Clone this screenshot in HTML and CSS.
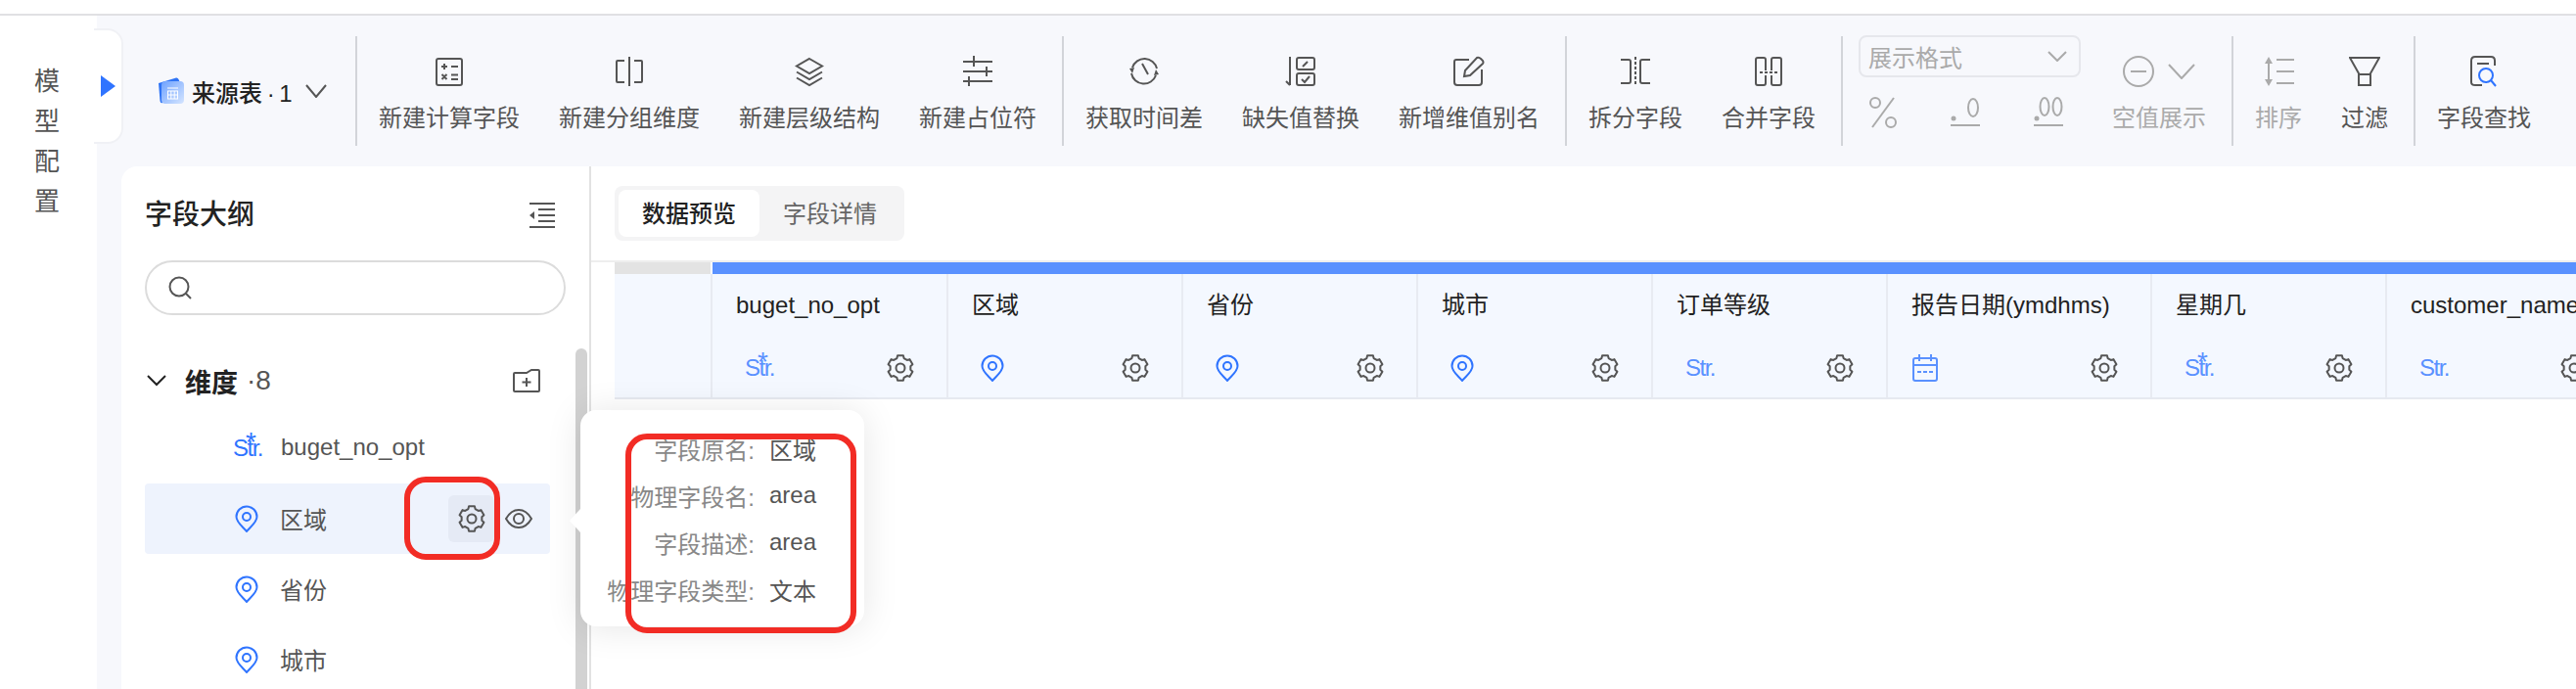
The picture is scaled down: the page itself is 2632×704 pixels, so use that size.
FILE: index.html
```html
<!DOCTYPE html>
<html lang="zh-CN">
<head>
    <meta charset="UTF-8">
    <title>模型配置</title>
    <link rel="stylesheet" href="styles.css">
</head>
<body>
<svg class="sprite" width="0" height="0">
    <symbol id="gear" viewBox="0 0 28 28">
        <path d="M11.08 1.33L16.92 1.33L17.59 4.13L20.75 5.96L23.5 5.13L26.43 10.2L24.34 12.18L24.34 15.82L26.43 17.8L23.5 22.87L20.75 22.04L17.59 23.87L16.92 26.67L11.08 26.67L10.41 23.87L7.25 22.04L4.5 22.87L1.57 17.8L3.66 15.82L3.66 12.18L1.57 10.2L4.5 5.13L7.25 5.96L10.41 4.13Z"/>
        <circle cx="14" cy="14" r="4.5"/>
    </symbol>
    <symbol id="pin" viewBox="0 0 24 28">
        <path d="M12 27C9 23 1.5 18 1.5 12A10.5 10.5 0 0 1 22.5 12C22.5 18 15 23 12 27Z"/>
        <circle cx="12" cy="12" r="4"/>
    </symbol>
</svg>

<div class="page">
    <div class="topline"></div>
    <div class="app">
        <div class="rail">
            <div class="rail-title">模<br>型<br>配<br>置</div>
        </div>
        <div class="rail-tab"><span class="rail-arrow"></span></div>

        <div class="main">
            <div class="toolbar">
                <div class="source">
                    <svg class="source-icon" width="28" height="28" viewBox="0 0 28 28">
                        <defs>
                            <linearGradient id="srcfront" x1="0" y1="0" x2="1" y2="1">
                                <stop offset="0" stop-color="#6ea2ff"/>
                                <stop offset="1" stop-color="#d5e5ff"/>
                            </linearGradient>
                        </defs>
                        <path d="M1 6L19 0.5Q21 0 22 3L23 6L5 26Q3 27 2.500 24Z" fill="#2f74f5"/>
                        <rect x="4" y="4" width="23" height="23" rx="4" fill="url(#srcfront)"/>
                        <g stroke="#fff" stroke-width="1" fill="none">
                            <path d="M10 11H21"/>
                            <rect x="10.500" y="14" width="10" height="8"/>
                            <path d="M10.500 18H20.500M13.800 14V22M17.200 14V22"/>
                        </g>
                    </svg>
                    <span class="source-name">来源表 · 1</span>
                    <svg class="chevron" width="22" height="14" viewBox="0 0 22 14"><path d="M1 1L11 13L21 1"/></svg>
                </div>

                <div class="tool-group">
                    <div class="tool">
                        <svg class="tool-icon" viewBox="0 0 32 32"><rect x="3" y="3" width="26" height="27" rx="2"/><path d="M8 11H14M11 8V14M18 11H25M8.500 19L13.500 24M13.500 19L8.500 24M18 19.500H25M18 24H25"/></svg>
                        <span class="tool-label">新建计算字段</span>
                    </div>
                    <div class="tool">
                        <svg class="tool-icon" viewBox="0 0 32 32"><path d="M16 1V31M11 5H4Q3 5 3 6V26Q3 27 4 27H11M21 5H28Q29 5 29 6V26Q29 27 28 27H21"/></svg>
                        <span class="tool-label">新建分组维度</span>
                    </div>
                    <div class="tool">
                        <svg class="tool-icon" viewBox="0 0 32 32"><path d="M16 3L29 10.500L16 18L3 10.500Z"/><path d="M3 16.500L16 24L29 16.500M3 22.500L16 30L29 22.500"/></svg>
                        <span class="tool-label">新建层级结构</span>
                    </div>
                    <div class="tool">
                        <svg class="tool-icon" viewBox="0 0 32 32"><path d="M1 6H31M1 16H31M1 26H31M12 0V11M25 11V21M7 21V31"/></svg>
                        <span class="tool-label">新建占位符</span>
                    </div>
                </div>

                <div class="tool-group">
                    <div class="tool">
                        <svg class="tool-icon" viewBox="0 0 32 32"><path d="M4 12A13 13 0 0 1 29 13M28 20A13 13 0 0 1 3 18M14 8L20 19"/><path class="solid" d="M1 13L6 12L4 18ZM31 19L26 20L28 14Z"/></svg>
                        <span class="tool-label">获取时间差</span>
                    </div>
                    <div class="tool">
                        <svg class="tool-icon" viewBox="0 0 32 32"><path d="M5 1V30M1 26L5 30"/><rect x="12" y="2" width="18" height="12" rx="2"/><rect x="12" y="18" width="18" height="12" rx="2"/><path d="M18 11L23 6M17 24L20 27L25 21"/></svg>
                        <span class="tool-label">缺失值替换</span>
                    </div>
                    <div class="tool">
                        <svg class="tool-icon" viewBox="0 0 32 32"><path d="M16 4H3Q1 4 1 6V27Q1 30 4 30H26Q29 30 29 27V14M11 21L12 15L24 2Q26 1 28 3L30 5Q31 7 30 8L17 20Z"/></svg>
                        <span class="tool-label">新增维值别名</span>
                    </div>
                </div>

                <div class="tool-group">
                    <div class="tool">
                        <svg class="tool-icon" viewBox="0 0 32 32"><path d="M1 4H9Q11 4 11 6V26Q11 28 9 28H1M31 4H23Q21 4 21 6V26Q21 28 23 28H31"/><path class="dash" d="M16 1V31"/></svg>
                        <span class="tool-label">拆分字段</span>
                    </div>
                    <div class="tool">
                        <svg class="tool-icon" viewBox="0 0 32 32"><path d="M13 15V4Q13 2 11 2H5Q3 2 3 4V28Q3 30 5 30H11Q13 30 13 28V20M19 15V4Q19 2 21 2H27Q29 2 29 4V28Q29 30 27 30H21Q19 30 19 28V20"/><path class="dash" d="M7 17H25"/></svg>
                        <span class="tool-label">合并字段</span>
                    </div>
                </div>

                <div class="tool-group format-group">
                    <div class="format">
                        <div class="format-select">
                            <span>展示格式</span>
                            <svg class="chevron" width="20" height="11" viewBox="0 0 20 11"><path d="M1 1L10 10L19 1"/></svg>
                        </div>
                        <div class="format-icons">
                            <svg width="28" height="32" viewBox="0 0 28 32"><circle cx="6" cy="6" r="5"/><circle cx="22" cy="26" r="5"/><path d="M25 1L3 31"/></svg>
                            <svg width="30" height="32" viewBox="0 0 30 32"><circle class="solid" cx="3" cy="22" r="2.500"/><ellipse cx="23" cy="11" rx="5" ry="9"/><path d="M0 29H30"/></svg>
                            <svg width="30" height="32" viewBox="0 0 30 32"><circle class="solid" cx="3" cy="22" r="2.500"/><ellipse cx="11" cy="10" rx="4.500" ry="9"/><ellipse cx="24" cy="10" rx="4.500" ry="9"/><path d="M0 29H30"/></svg>
                        </div>
                    </div>
                    <div class="tool tool-off">
                        <div class="null-icons">
                            <svg width="32" height="32" viewBox="0 0 32 32"><circle cx="16" cy="16" r="15"/><path d="M8 16H24"/></svg>
                            <svg class="chevron" width="28" height="16" viewBox="0 0 28 16"><path d="M1 1L14 15L27 1"/></svg>
                        </div>
                        <span class="tool-label">空值展示</span>
                    </div>
                </div>

                <div class="tool-group">
                    <div class="tool tool-off">
                        <svg class="tool-icon" viewBox="0 0 32 32"><path d="M14 4H32M14 16H32M14 28H32M6 6V26"/><path class="solid" d="M6 1L10 8H2ZM6 31L10 24H2Z"/></svg>
                        <span class="tool-label">排序</span>
                    </div>
                    <div class="tool">
                        <svg class="tool-icon" viewBox="0 0 32 32"><path d="M1 2H31L22 18V30H10V18ZM10 19H22"/></svg>
                        <span class="tool-label">过滤</span>
                    </div>
                </div>

                <div class="tool-group last-group">
                    <div class="tool">
                        <svg class="tool-icon" viewBox="0 0 32 32">
                            <path d="M14 30H7Q3 30 3 27V5Q3 1 7 1H23Q27 1 27 5V10M9 8H21"/>
                            <circle class="blue-stroke" cx="18" cy="20" r="7"/>
                            <path class="blue-stroke" d="M23 25L28 31"/>
                        </svg>
                        <span class="tool-label">字段查找</span>
                    </div>
                </div>
            </div>

            <div class="content">
                <div class="outline">
                    <div class="outline-head">
                        <span class="outline-title">字段大纲</span>
                        <svg class="line-icon" width="26" height="26" viewBox="0 0 26 26"><path d="M0 1H26M9 13H26M9 7H26M9 19H26M0 25H26"/><path class="solid" d="M0 13L5 9V17Z"/></svg>
                    </div>
                    <div class="search">
                        <svg class="line-icon" width="24" height="24" viewBox="0 0 24 24"><circle cx="11" cy="11" r="9.500"/><path d="M18 18L23 23"/></svg>
                    </div>
                    <div class="section-head">
                        <svg class="line-icon dark" width="20" height="12" viewBox="0 0 20 12"><path d="M1 1L10 10L19 1"/></svg>
                        <span class="section-name">维度</span>
                        <span class="section-count">·8</span>
                        <svg class="line-icon section-add" width="28" height="24" viewBox="0 0 28 24"><path d="M1 5Q1 4 2 4H14L19 1H26Q27 1 27 2V22Q27 23 26 23H2Q1 23 1 22ZM14 9V18M9.500 13.500H18.500"/></svg>
                    </div>
                    <div class="field-row">
                        <span class="type-str type-dark starred">Str.</span>
                        <span class="field-name">buget_no_opt</span>
                    </div>
                    <div class="field-row active">
                        <svg class="pin-icon" width="24" height="28"><use href="#pin"/></svg>
                        <span class="field-name">区域</span>
                        <div class="row-actions">
                            <span class="gear-box"><svg class="gear-icon" width="28" height="28"><use href="#gear"/></svg></span>
                            <svg class="line-icon" width="28" height="20" viewBox="0 0 28 20"><path d="M1 10C5 3 9 1 14 1C19 1 23 3 27 10C23 17 19 19 14 19C9 19 5 17 1 10Z"/><circle cx="14" cy="10" r="5"/></svg>
                        </div>
                    </div>
                    <div class="field-row">
                        <svg class="pin-icon" width="24" height="28"><use href="#pin"/></svg>
                        <span class="field-name">省份</span>
                    </div>
                    <div class="field-row">
                        <svg class="pin-icon" width="24" height="28"><use href="#pin"/></svg>
                        <span class="field-name">城市</span>
                    </div>
                    <div class="scroll-thumb"></div>
                </div>

                <div class="preview">
                    <div class="tabs">
                        <span class="tab tab-on">数据预览</span>
                        <span class="tab">字段详情</span>
                    </div>
                    <div class="preview-line"></div>
                    <div class="table">
                        <div class="strip">
                            <div class="strip-stub"></div>
                            <div class="strip-blue"></div>
                        </div>
                        <div class="head-row">
                            <div class="col col-stub"></div>
                            <div class="col col-first">
                                <div class="col-title">buget_no_opt</div>
                                <div class="col-foot"><span class="type-str starred">Str.</span><svg class="gear-icon" width="28" height="28"><use href="#gear"/></svg></div>
                            </div>
                            <div class="col">
                                <div class="col-title">区域</div>
                                <div class="col-foot"><svg class="pin-icon col-pin" width="24" height="28"><use href="#pin"/></svg><svg class="gear-icon" width="28" height="28"><use href="#gear"/></svg></div>
                            </div>
                            <div class="col">
                                <div class="col-title">省份</div>
                                <div class="col-foot"><svg class="pin-icon col-pin" width="24" height="28"><use href="#pin"/></svg><svg class="gear-icon" width="28" height="28"><use href="#gear"/></svg></div>
                            </div>
                            <div class="col">
                                <div class="col-title">城市</div>
                                <div class="col-foot"><svg class="pin-icon col-pin" width="24" height="28"><use href="#pin"/></svg><svg class="gear-icon" width="28" height="28"><use href="#gear"/></svg></div>
                            </div>
                            <div class="col">
                                <div class="col-title">订单等级</div>
                                <div class="col-foot"><span class="type-str">Str.</span><svg class="gear-icon" width="28" height="28"><use href="#gear"/></svg></div>
                            </div>
                            <div class="col col-wide">
                                <div class="col-title">报告日期(ymdhms)</div>
                                <div class="col-foot">
                                    <svg class="calendar-icon" width="26" height="28" viewBox="0 0 26 28"><rect x="1" y="4" width="24" height="23" rx="2"/><path d="M7 0V7M19 0V7M1 11H25"/><path stroke-dasharray="4 2" d="M5 18H22"/></svg>
                                    <svg class="gear-icon" width="28" height="28"><use href="#gear"/></svg>
                                </div>
                            </div>
                            <div class="col">
                                <div class="col-title">星期几</div>
                                <div class="col-foot"><span class="type-str starred">Str.</span><svg class="gear-icon" width="28" height="28"><use href="#gear"/></svg></div>
                            </div>
                            <div class="col">
                                <div class="col-title">customer_name</div>
                                <div class="col-foot"><span class="type-str">Str.</span><svg class="gear-icon" width="28" height="28"><use href="#gear"/></svg></div>
                            </div>
                        </div>
                    </div>
                </div>
            </div>
        </div>
    </div>

    <!-- 字段信息浮层 -->
    <div class="popover">
        <span class="pop-label">字段原名:</span><span class="pop-value">区域</span>
        <span class="pop-label">物理字段名:</span><span class="pop-value">area</span>
        <span class="pop-label">字段描述:</span><span class="pop-value">area</span>
        <span class="pop-label">物理字段类型:</span><span class="pop-value">文本</span>
    </div>

    <!-- 红框标注 -->
    <div class="mark mark-gear"></div>
    <div class="mark mark-info"></div>
</div>
</body>
</html>
```

FILE: styles.css
```css
* {
    box-sizing: border-box;
}

body {
    margin: 0;
    font-family: "Liberation Sans", "Noto Sans CJK SC", sans-serif;
    font-size: 24px;
    color: #555;
    background: #fff;
}

.sprite {
    position: absolute;
}

.page {
    position: relative;
    width: 2632px;
    height: 704px;
    overflow: hidden;
}

.topline {
    height: 16px;
    border-bottom: 2px solid #e0e0e3;
}

.app {
    display: flex;
    height: 688px;
    background: #f7f8fc;
}

/* 左侧竖条 */
.rail {
    width: 99px;
    flex: none;
    background: #fff;
}

.rail-title {
    margin-top: 47px;
    text-align: center;
    font-size: 26px;
    line-height: 41px;
    color: #555;
    padding-right: 3px;
}

.rail-tab {
    position: absolute;
    left: 96px;
    top: 29px;
    width: 30px;
    height: 118px;
    background: #fff;
    border: 2px solid #f0f1f5;
    border-left: none;
    border-radius: 0 16px 16px 0;
}

.rail-arrow {
    position: absolute;
    left: 7px;
    top: 46px;
    border-left: 15px solid #2f74ff;
    border-top: 11px solid transparent;
    border-bottom: 11px solid transparent;
}

.main {
    flex: 1;
    min-width: 0;
    display: flex;
    flex-direction: column;
}

/* 工具栏 */
.toolbar {
    height: 154px;
    flex: none;
    display: flex;
    padding-top: 21px;
    padding-left: 62px;
}

.source {
    width: 202px;
    height: 112px;
    display: flex;
    align-items: center;
    flex: none;
}

.source-icon {
    flex: none;
}

.source-name {
    margin-left: 7px;
    color: #222;
    font-weight: 500;
    white-space: nowrap;
    word-spacing: -2px;
}

.chevron {
    flex: none;
    fill: none;
    stroke: currentColor;
    stroke-width: 2;
}

.source .chevron {
    margin-left: 13px;
    color: #555;
}

.tool-group {
    height: 112px;
    display: flex;
    gap: 40px;
    padding: 0 26px 0 22px;
    border-left: 2px solid #d2d4d9;
}

.tool {
    display: flex;
    flex-direction: column;
    align-items: center;
    padding-top: 20px;
}

.tool-icon {
    width: 32px;
    height: 32px;
    fill: none;
    stroke: #555;
    stroke-width: 2;
}

.tool-icon .solid,
.line-icon .solid,
.format-icons .solid {
    fill: currentColor;
    stroke: none;
}

.tool-icon .solid {
    fill: #555;
}

.tool-icon .dash {
    stroke-dasharray: 3 2;
}

.tool-icon .blue-stroke {
    stroke: #2f74ff;
}

.tool-label {
    margin-top: 16px;
    line-height: 32px;
    color: #555;
    white-space: nowrap;
}

.tool-off .tool-label {
    color: #aaa;
}

.tool-off .tool-icon {
    stroke: #aaa;
}

.tool-off .tool-icon .solid {
    fill: #aaa;
}

/* 展示格式 */
.format-group {
    gap: 32px;
    padding-left: 16px;
}

.format {
    width: 227px;
}

.format-select {
    height: 43px;
    margin-top: -1px;
    padding: 0 12px 0 8px;
    display: flex;
    align-items: center;
    justify-content: space-between;
    border: 2px solid #e6e7ec;
    border-radius: 8px;
    color: #aaa;
}

.format-icons {
    display: flex;
    gap: 55px;
    margin-top: 20px;
    padding-left: 11px;
}

.format-icons svg {
    fill: none;
    stroke: #aaa;
    stroke-width: 2;
    color: #aaa;
}

.null-icons {
    display: flex;
    align-items: center;
    gap: 14px;
    height: 32px;
    color: #aaa;
}

.null-icons svg {
    fill: none;
    stroke: #aaa;
    stroke-width: 2;
}

.content {
    flex: 1;
    min-height: 0;
    display: flex;
    padding-left: 25px;
}

/* 字段大纲 */
.outline {
    position: relative;
    width: 480px;
    flex: none;
    padding: 0 0 0 24px;
    background: #fff;
    border-right: 2px solid #e2e2e2;
    border-radius: 16px 0 0 0;
}

.outline-head {
    display: flex;
    align-items: center;
    justify-content: space-between;
    height: 40px;
    margin-top: 30px;
    padding-right: 35px;
}

.outline-title {
    font-size: 28px;
    font-weight: 500;
    color: #222;
    line-height: 40px;
}

.line-icon {
    flex: none;
    fill: none;
    stroke: #555;
    stroke-width: 2;
    color: #555;
}

.line-icon.dark {
    stroke: #222;
}

.search {
    width: 430px;
    height: 56px;
    margin-top: 26px;
    padding-left: 22px;
    display: flex;
    align-items: center;
    border: 2px solid #dcdcdc;
    border-radius: 28px;
}

.section-head {
    display: flex;
    align-items: center;
    width: 414px;
    height: 40px;
    margin-top: 47px;
    padding-left: 2px;
}

.section-name {
    margin-left: 19px;
    font-size: 27px;
    font-weight: 700;
    color: #222;
}

.section-count {
    margin-left: 9px;
    font-size: 28px;
    color: #555;
}

.section-add {
    margin-left: auto;
    margin-right: 10px;
}

.field-row {
    display: flex;
    align-items: center;
    gap: 22px;
    width: 414px;
    height: 72px;
    padding-left: 92px;
    border-radius: 4px;
}

.section-head + .field-row {
    margin-top: 13px;
}

.field-row .type-str {
    margin-left: -2px;
    margin-right: -2px;
}

.field-row.active {
    background: #eef3fd;
}

.field-name {
    color: #555;
    font-size: 24px;
    padding-bottom: 2px;
}

.row-actions {
    margin-left: auto;
    margin-right: 18px;
    display: flex;
    align-items: center;
    gap: 11px;
}

.gear-box {
    width: 47px;
    height: 48px;
    display: flex;
    align-items: center;
    justify-content: center;
    background: #e5eaf5;
    border-radius: 6px;
}

.gear-icon {
    flex: none;
    fill: none;
    stroke: #555;
    stroke-width: 2;
    stroke-linejoin: round;
}

.pin-icon {
    flex: none;
    fill: none;
    stroke: #2f74ff;
    stroke-width: 2;
}

.type-str {
    position: relative;
    display: inline-block;
    width: 29px;
    flex: none;
    font-size: 24px;
    line-height: 28px;
    letter-spacing: -1.5px;
    white-space: nowrap;
    color: #5a91ff;
}

.type-dark {
    color: #2f74ff;
}

.type-str.starred::after {
    content: "*";
    position: absolute;
    left: 13px;
    top: -6px;
    font-size: 28px;
}

.scroll-thumb {
    position: absolute;
    left: 464px;
    top: 186px;
    width: 12px;
    height: 400px;
    border-radius: 6px;
    background: #d2d2d2;
}

/* 右侧预览 */
.preview {
    flex: 1;
    min-width: 0;
    background: #fff;
    overflow: hidden;
}

.tabs {
    display: flex;
    width: 296px;
    height: 56px;
    margin: 20px 0 0 24px;
    padding: 4px;
    gap: 0;
    background: #f4f4f5;
    border-radius: 8px;
}

.tab {
    width: 144px;
    height: 48px;
    line-height: 50px;
    text-align: center;
    color: #666;
}

.tab-on {
    background: #fff;
    border-radius: 8px;
    color: #222;
    font-weight: 500;
}

.preview-line {
    height: 2px;
    margin-top: 20px;
    background: #eee;
}

.table {
    margin-left: 24px;
    width: 2100px;
}

.strip {
    display: flex;
    gap: 2px;
    height: 12px;
}

.strip-stub {
    width: 98px;
    background: #e3e3e3;
}

.strip-blue {
    flex: 1;
    background: #5a91ff;
}

.head-row {
    display: flex;
    height: 128px;
    border-bottom: 2px solid #e6e9f0;
    background: #f4f8ff;
}

.col {
    width: 240px;
    flex: none;
    padding: 14px 33px 0 24px;
    border-right: 2px solid #e8ebf2;
}

.col-stub {
    width: 100px;
}

.col-first {
    width: 241px;
}

.col-wide {
    width: 270px;
}

.col-title {
    line-height: 36px;
    color: #222;
    white-space: nowrap;
}

.col-foot {
    display: flex;
    align-items: center;
    justify-content: space-between;
    height: 36px;
    margin-top: 28px;
}

.col-foot .type-str,
.col-pin {
    margin-left: 9px;
}

.calendar-icon {
    flex: none;
    fill: none;
    stroke: #5a91ff;
    stroke-width: 2;
    margin-left: 1px;
}

/* 浮层 */
.popover {
    position: absolute;
    left: 593px;
    top: 419px;
    width: 290px;
    height: 221px;
    padding-top: 15px;
    padding-left: 0;
    display: grid;
    grid-template-columns: 178px auto;
    grid-auto-rows: 48px;
    column-gap: 15px;
    align-items: center;
    justify-content: start;
    background: #fff;
    border-radius: 16px;
    box-shadow: 0 2px 36px rgba(0, 0, 0, 0.1);
}

.popover::before {
    content: "";
    position: absolute;
    left: -11px;
    top: 101px;
    border-right: 11px solid #fff;
    border-top: 12px solid transparent;
    border-bottom: 12px solid transparent;
}

.pop-label {
    text-align: right;
    color: #888;
    white-space: nowrap;
}

.pop-value {
    color: #555;
}

/* 红框 */
.mark {
    position: absolute;
    border: 6px solid #f22c25;
}

.mark-gear {
    left: 413px;
    top: 487px;
    width: 98px;
    height: 85px;
    border-radius: 22px;
}

.mark-info {
    left: 639px;
    top: 443px;
    width: 236px;
    height: 204px;
    border-radius: 22px;
}
```
